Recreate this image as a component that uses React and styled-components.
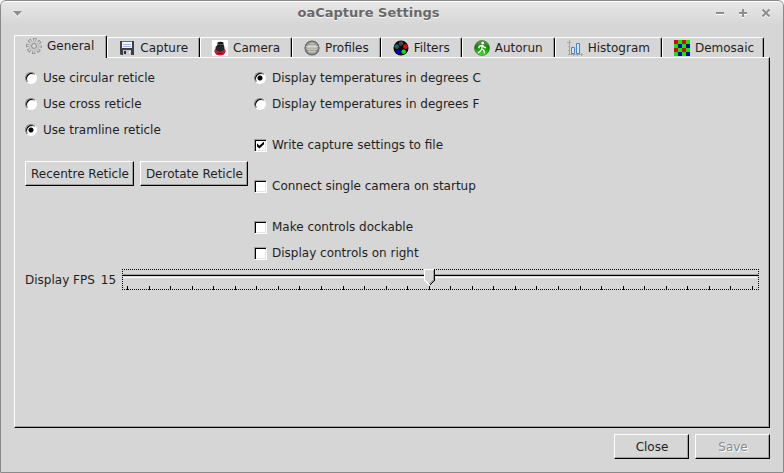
import React, { useState } from "react";
import styled, { createGlobalStyle, css } from "styled-components";

const Global = createGlobalStyle`
  * { box-sizing: border-box; }
  html, body, #root { height: 100%; }
  body {
    margin: 0;
    background: #fff;
    color: #1f1f1f;
    font: 12px/16px "DejaVu Sans", Verdana, sans-serif;
  }
  button, input { font: inherit; color: inherit; margin: 0; }
`;

const Window = styled.div`
  display: flex;
  flex-direction: column;
  min-height: 100%;
  border: 1px solid #8a8a8a;
  border-radius: 6px 6px 0 0;
  background: linear-gradient(#e8e8e8, #d6d6d6 24px);
  box-shadow: inset 0 1px #fff;
`;

const TitleBar = styled.header`
  display: grid;
  grid-template-columns: 80px 1fr 126px;
  align-items: center;
  height: 24px;
  padding: 0 9px 0 8px;
`;

const Title = styled.h1`
  margin: 0;
  color: #696969;
  font-size: 13px;
  line-height: 16px;
  text-align: center;
  text-shadow: 0 1px #f4f4f4;
`;

const WindowButtons = styled.div`
  display: flex;
  gap: 7px;
  justify-content: ${(p) => (p.$end ? "flex-end" : "flex-start")};
`;

const WindowButton = styled.button`
  display: flex;
  width: 16px;
  height: 16px;
  padding: 0;
  border: 0;
  background: none;
  color: #8e8e8e;
`;

const Body = styled.main`
  display: flex;
  flex: 1;
  flex-direction: column;
  padding: 10px 13px 13px;
`;

const TabList = styled.div`
  display: flex;
  align-items: flex-end;
  height: 22px;
`;

const Tab = styled.button`
  display: flex;
  align-items: center;
  gap: 5px;
  height: 20px;
  padding: 0 11px;
  border: 0;
  border-top: 1px solid #fff;
  border-left: 1px solid #fff;
  border-right: 1px solid #000;
  border-radius: 2px 2px 0 0;
  background: #d6d6d6;
  box-shadow: inset -1px 0 #a0a0a0;
  white-space: nowrap;
  &:last-child { padding-right: 9px; }
  ${(p) =>
    p.$active &&
    css`
      z-index: 1;
      height: 23px;
      margin-bottom: -1px;
      padding: 0 12px 2px 11px;
    `}
  svg { flex: none; }
`;

const Panel = styled.section`
  display: flex;
  flex: 1;
  flex-direction: column;
  padding: 12px 10px;
  border: 1px solid #000;
  border-top-color: #fff;
  border-left-color: #fff;
  box-shadow: inset -1px -1px #a0a0a0;
`;

const Columns = styled.div`
  display: grid;
  grid-template-columns: 223px 1fr;
  gap: 6px;
`;

const Column = styled.div`
  display: flex;
  flex-direction: column;
  align-items: flex-start;
`;

const Group = styled.div`
  display: flex;
  flex-direction: column;
  gap: 10px;
  margin-bottom: ${(p) => (p.$last ? 0 : p.$wide ? 23 : 25)}px;
`;

const Option = styled.label`
  display: grid;
  grid-template-columns: 13px auto;
  align-items: center;
  gap: 5px;
  height: 16px;
  white-space: nowrap;
`;

const Radio = styled.input.attrs({ type: "radio" })`
  appearance: none;
  width: 12px;
  height: 12px;
  border: 1px solid;
  border-color: #808080 #fff #fff #808080;
  border-radius: 50%;
  background: #fff;
  box-shadow: inset 1px 1px #000;
  &:checked { background: radial-gradient(circle, #000 0 2px, #fff 3px); }
`;

const Check = styled.input.attrs({ type: "checkbox" })`
  appearance: none;
  display: grid;
  width: 13px;
  height: 13px;
  border: 1px solid;
  border-color: #a0a0a0 #fff #fff #a0a0a0;
  background: #fff;
  box-shadow: inset 1px 1px #000, inset -1px -1px #e4e4e4;
  &:checked::before {
    content: "";
    place-self: center;
    width: 7px;
    height: 7px;
    background: #000;
    clip-path: polygon(0 30%, 35% 60%, 100% 0, 100% 40%, 35% 100%, 0 70%);
  }
`;

const ButtonRow = styled.div`
  display: flex;
  gap: 6px;
  justify-content: ${(p) => (p.$end ? "flex-end" : "flex-start")};
  ${(p) => p.$end && "padding-top: 6px;"}
`;

const Button = styled.button`
  height: 25px;
  min-width: ${(p) => (p.$dialog ? 75 : 0)}px;
  padding: 0 4px 0 5px;
  border: 1px solid;
  border-color: #fff #000 #000 #fff;
  background: #d6d6d6;
  box-shadow: inset -1px -1px #a0a0a0;
  white-space: nowrap;
  &:disabled { color: #8a8a8a; text-shadow: 1px 1px #fff; }
`;

const SliderRow = styled.div`
  display: flex;
  align-items: center;
  gap: 6px;
  margin-top: 8px;
`;

const SliderFrame = styled.div`
  flex: 1;
  height: 21px;
  border: 1px dotted #000;
`;

const Range = styled.input.attrs({ type: "range" })`
  appearance: none;
  display: block;
  width: 100%;
  height: 16px;
  margin: -1px 0 1px;
  outline: 0;
  background: linear-gradient(#a0a0a0 0 1px, #000 1px 2px, #d6d6d6 2px 3px, #fff 3px 4px) 0 5px / 100% 4px no-repeat;
  &::-webkit-slider-thumb {
    appearance: none;
    width: 11px;
    height: 16px;
    background: url("data:image/svg+xml,%3Csvg xmlns='http://www.w3.org/2000/svg' width='11' height='16' shape-rendering='crispEdges'%3E%3Cpath d='M0 0h11v11l-5 5h-1l-5-5z' fill='%23d6d6d6'/%3E%3Cpath d='M10.5 0v11l-5 5' stroke='%23000' fill='none'/%3E%3Cpath d='M9.5 1v10l-4 4' stroke='%23a0a0a0' fill='none'/%3E%3Cpath d='M10 .5H.5V11l5 5' stroke='%23fff' fill='none'/%3E%3C/svg%3E");
  }
`;

const Ticks = styled.div`
  display: flex;
  justify-content: space-between;
  height: 4px;
  padding: 0 5px 0 4px;
`;

const Tick = styled.i`
  width: 1px;
  background: #000;
`;

function Gear() {
  return (
    <svg width="16" height="16" viewBox="0 0 16 16">
      <g fill="none">
        <circle cx="8" cy="8" r="6" stroke="#8a8a8a" strokeWidth="4" strokeDasharray="2.9 1.812" strokeDashoffset="1.450" />
        <circle cx="8" cy="8" r="5.800" stroke="#d4d4d4" strokeWidth="2.800" strokeDasharray="1.500 3.055" strokeDashoffset=".750" />
        <circle cx="8" cy="8" r="4.200" stroke="#c6c6c6" strokeWidth="2.600" />
        <circle cx="8" cy="8" r="2.400" stroke="#858585" fill="#dcdcdc" />
      </g>
    </svg>
  );
}

function Floppy() {
  return (
    <svg width="16" height="16" viewBox="0 0 16 16">
      <path d="M1 1h14v14H2l-1-1z" fill="#3c3f45" />
      <path d="M3 1h10v7H3z" fill="#f1f5fa" />
      <path d="M3 1h10v1H3z" fill="#4f6f9d" />
      <path d="M4 4.500h8M4 6.500h8" stroke="#9db8d8" />
      <path d="M4 10h8v5H4z" fill="#c8c8c8" />
      <path d="M5 11h2v3H5z" fill="#292c31" />
      <path d="M10 11h1v3h-1z" fill="#eee" />
    </svg>
  );
}

function CameraIcon() {
  return (
    <svg width="16" height="16" viewBox="0 0 16 16">
      <path d="M0 0h16v16H0z" fill="#fff" />
      <ellipse cx="8" cy="11.300" rx="5.600" ry="4.200" fill="#c91935" />
      <path d="M3.500 7l2-2h6l1 2-.5 3-4 2-4-2z" fill="#24262a" />
      <path d="M5.500 2.500q3-1.500 6 0V6h-6z" fill="#101215" />
      <path d="M6 4.500h5" stroke="#50565e" />
      <path d="M5.500 13q2.500 1.500 5 0" stroke="#5a1322" fill="none" />
    </svg>
  );
}

function Planet() {
  return (
    <svg width="16" height="16" viewBox="0 0 16 16">
      <defs>
        <radialGradient id="planet">
          <stop offset=".6" stopColor="#c4c5bd" />
          <stop offset="1" stopColor="#4d5252" />
        </radialGradient>
      </defs>
      <circle cx="8" cy="8" r="7.500" fill="url(#planet)" />
      <g opacity=".7">
        <path d="M4 4.500h8M3 10.500h10" stroke="#93968f" />
        <path d="M2 6.500h12" stroke="#e2dfd2" />
        <path d="M2 8.500h12" stroke="#b9a992" />
        <path d="M4 12.500h8" stroke="#a6aaa7" />
      </g>
    </svg>
  );
}

function Wheel() {
  return (
    <svg width="16" height="16" viewBox="0 0 16 16">
      <circle cx="8" cy="8" r="7.500" fill="#080808" />
      <circle cx="8" cy="3.500" r="2.300" fill="#4a4a4a" />
      <circle cx="12.300" cy="6.600" r="2.300" fill="#f00000" />
      <circle cx="10.700" cy="11.700" r="2.300" fill="#00e800" />
      <circle cx="5.300" cy="11.700" r="2.300" fill="#0000d8" />
      <circle cx="3.700" cy="6.600" r="2.300" fill="#12686a" />
    </svg>
  );
}

function Runner() {
  return (
    <svg width="16" height="16" viewBox="0 0 16 16">
      <defs>
        <linearGradient id="run" x2="0" y2="1">
          <stop stopColor="#6b9b62" />
          <stop offset=".45" stopColor="#13810b" />
          <stop offset="1" stopColor="#38f01a" />
        </linearGradient>
      </defs>
      <circle cx="8" cy="8" r="7.500" fill="url(#run)" stroke="#176b11" strokeWidth=".6" />
      <circle cx="8.700" cy="3.100" r="1.400" fill="#fff" />
      <path d="M8.300 5L7.700 9M8 5.300L5.300 6.300 4.700 8.300M8.500 5.300l1.700 2 2 .4M7.800 8.800L6.500 11l-2.500 2M8 8.800l2 1.700.5 3" fill="none" stroke="#fff" strokeWidth="1.400" />
    </svg>
  );
}

function Bars() {
  return (
    <svg width="16" height="16" viewBox="0 0 16 16">
      <path d="M2.500 0v15M1 14.500h15M0 2.500h4M1 6.500h2M1 10.500h2M6.500 13v3M10.500 13v3M14.500 13v3" stroke="#a6a6a6" fill="none" />
      <path d="M4.500 7.500h3v6h-3zM9.500 3.500h3v10h-3z" fill="#d5e9fb" stroke="#4d80bd" />
    </svg>
  );
}

function Mosaic() {
  return (
    <svg width="16" height="16" viewBox="0 0 16 16" shapeRendering="crispEdges">
      <path d="M0 0h16v16H0z" fill="#00f000" />
      <path d="M0 0h4v4H0zM8 0h4v4H8zM0 8h4v4H0zM8 8h4v4H8z" fill="#e80000" />
      <path d="M4 4h4v4H4zM12 4h4v4h-4zM4 12h4v4H4zM12 12h4v4h-4z" fill="#0000b8" />
    </svg>
  );
}

const TABS = [
  ["General", Gear],
  ["Capture", Floppy],
  ["Camera", CameraIcon],
  ["Profiles", Planet],
  ["Filters", Wheel],
  ["Autorun", Runner],
  ["Histogram", Bars],
  ["Demosaic", Mosaic],
];

const WINDOW_ACTIONS = [
  ["Minimize", "M4 8h8"],
  ["Maximize", "M4 8h8M8 4v8"],
  ["Close window", "M4.500 4.500l7 7M11.500 4.500l-7 7"],
];

export default function App() {
  const [tab, setTab] = useState("General");
  const [fps, setFps] = useState(15);
  return (
    <>
      <Global />
      <Window>
        <TitleBar>
          <WindowButtons>
            <WindowButton aria-label="Window menu">
              <svg width="16" height="16" viewBox="0 0 16 16">
                <path d="M4 6h9l-4.500 5z" fill="#fff" transform="translate(0 1)" />
                <path d="M4 6h9l-4.500 5z" fill="currentColor" />
              </svg>
            </WindowButton>
          </WindowButtons>
          <Title>oaCapture Settings</Title>
          <WindowButtons $end>
            {WINDOW_ACTIONS.map(([label, d]) => (
              <WindowButton key={label} aria-label={label}>
                <svg width="16" height="16" viewBox="0 0 16 16">
                  <path d={d} stroke="#fff" strokeWidth="2" transform="translate(0 1)" />
                  <path d={d} stroke="currentColor" strokeWidth="2" />
                </svg>
              </WindowButton>
            ))}
          </WindowButtons>
        </TitleBar>
        <Body>
          <TabList role="tablist">
            {TABS.map(([name, Icon]) => (
              <Tab key={name} role="tab" aria-selected={tab === name} $active={tab === name} onClick={() => setTab(name)}>
                <Icon />
                {name}
              </Tab>
            ))}
          </TabList>
          <Panel role="tabpanel" aria-label={tab}>
            <Columns>
              <Column>
                <Group $wide>
                  <Option><Radio name="reticle" />Use circular reticle</Option>
                  <Option><Radio name="reticle" />Use cross reticle</Option>
                  <Option><Radio name="reticle" defaultChecked />Use tramline reticle</Option>
                </Group>
                <ButtonRow>
                  <Button>Recentre Reticle</Button>
                  <Button>Derotate Reticle</Button>
                </ButtonRow>
              </Column>
              <Column>
                <Group>
                  <Option><Radio name="temperature" defaultChecked />Display temperatures in degrees C</Option>
                  <Option><Radio name="temperature" />Display temperatures in degrees F</Option>
                </Group>
                <Group>
                  <Option><Check defaultChecked />Write capture settings to file</Option>
                </Group>
                <Group>
                  <Option><Check />Connect single camera on startup</Option>
                </Group>
                <Group $last>
                  <Option><Check />Make controls dockable</Option>
                  <Option><Check />Display controls on right</Option>
                </Group>
              </Column>
            </Columns>
            <SliderRow>
              <label htmlFor="fps">Display FPS</label>
              <output htmlFor="fps">{fps}</output>
              <SliderFrame>
                <Range id="fps" min="1" max="30" value={fps} onChange={(e) => setFps(Number(e.target.value))} />
                <Ticks>
                  {Array.from({ length: 30 }, (_, i) => <Tick key={i} />)}
                </Ticks>
              </SliderFrame>
            </SliderRow>
          </Panel>
          <ButtonRow $end>
            <Button $dialog>Close</Button>
            <Button $dialog disabled>Save</Button>
          </ButtonRow>
        </Body>
      </Window>
    </>
  );
}
